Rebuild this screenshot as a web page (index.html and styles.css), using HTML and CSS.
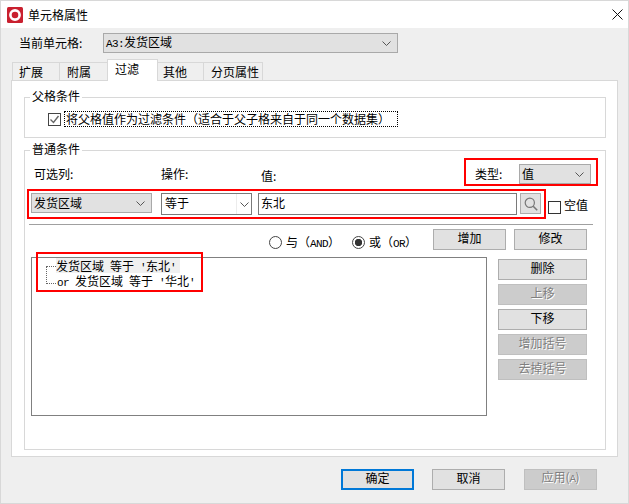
FILE: index.html
```html
<!DOCTYPE html>
<html lang="zh">
<head>
<meta charset="utf-8">
<title>单元格属性</title>
<link rel="stylesheet" href="styles.css">
</head>
<body>
<div class="window">
  <header class="titlebar">
    <svg class="app-icon" width="16" height="16" viewBox="0 0 16 16"><rect width="16" height="16" rx="1.5" fill="#c9202f"/><circle cx="8" cy="8" r="4.6" fill="none" stroke="#fff" stroke-width="2.6"/></svg>
    <span class="title">单元格属性</span>
    <svg class="close" width="11" height="11" viewBox="0 0 11 11"><path d="M.5.5l10 10M10.5.5l-10 10" stroke="#111" fill="none"/></svg>
  </header>

  <div class="cell-row">
    <span class="cell-label">当前单元格:</span>
    <div class="select select-cell">
      <span><span class="asc">A3:</span>发货区域</span>
      <svg class="chev" width="9" height="5" viewBox="0 0 9 5"><path d="M.5.5l4 4 4-4" stroke="#555" fill="none"/></svg>
    </div>
  </div>

  <nav class="tabs">
    <span class="tab tab-a">扩展</span>
    <span class="tab tab-b">附属</span>
    <span class="tab tab-active">过滤</span>
    <span class="tab tab-c">其他</span>
    <span class="tab tab-d">分页属性</span>
  </nav>

  <main class="panel">
    <fieldset class="group group-parent">
      <legend>父格条件</legend>
      <div class="parent-row">
        <svg class="check" width="13" height="13" viewBox="0 0 13 13"><rect x=".5" y=".5" width="12" height="12" fill="#fff" stroke="#444"/><path d="M2.5 6.5l3 3 5-6.5" stroke="#666" stroke-width="1.4" fill="none"/></svg>
        <span class="focus-label">将父格值作为过滤条件（适合于父子格来自于同一个数据集）</span>
      </div>
    </fieldset>

    <fieldset class="group group-normal">
      <legend>普通条件</legend>

      <div class="labels-row">
        <span class="col-1">可选列:</span>
        <span class="col-2">操作:</span>
        <span class="col-3">值:</span>
        <span class="type-label">类型:</span>
        <div class="select select-type">
          <span>值</span>
          <svg class="chev" width="9" height="5" viewBox="0 0 9 5"><path d="M.5.5l4 4 4-4" stroke="#555" fill="none"/></svg>
        </div>
      </div>

      <div class="fields-row">
        <div class="select select-col">
          <span>发货区域</span>
          <svg class="chev" width="9" height="5" viewBox="0 0 9 5"><path d="M.5.5l4 4 4-4" stroke="#555" fill="none"/></svg>
        </div>
        <div class="select select-op">
          <span class="op-value">等于</span>
          <span class="op-arrow"><svg class="chev" width="9" height="5" viewBox="0 0 9 5"><path d="M.5.5l4 4 4-4" stroke="#555" fill="none"/></svg></span>
        </div>
        <div class="text-input">东北</div>
        <div class="search-btn">
          <svg width="14" height="14" viewBox="0 0 14 14"><circle cx="5.8" cy="5.8" r="4.6" fill="none" stroke="#777" stroke-width="1.2"/><path d="M9.2 9.2l4 4" stroke="#777" stroke-width="1.6"/></svg>
        </div>
        <span class="box"></span>
        <span class="box-label">空值</span>
      </div>

      <div class="separator"></div>

      <div class="logic-row">
        <span class="radio"></span>
        <span class="radio-text">与（<span class="asc">AND</span>）</span>
        <span class="radio radio-on"></span>
        <span class="radio-text radio-text-or">或（<span class="asc">OR</span>）</span>
        <button class="btn btn-add">增加</button>
        <button class="btn btn-edit">修改</button>
      </div>

      <div class="list-row">
        <div class="tree">
          <div class="tree-row"><span class="tree-sel">发货区域<span class="asc"> </span>等于<span class="asc"> '</span>东北<span class="asc">'</span></span></div>
          <div class="tree-row tree-row-second"><span class="asc">or </span>发货区域<span class="asc"> </span>等于<span class="asc"> '</span>华北<span class="asc">'</span></div>
        </div>
        <div class="side-btns">
          <button class="btn btn-side">删除</button>
          <button class="btn btn-side btn-off">上移</button>
          <button class="btn btn-side">下移</button>
          <button class="btn btn-side btn-off">增加括号</button>
          <button class="btn btn-side btn-off">去掉括号</button>
        </div>
      </div>
    </fieldset>
  </main>

  <footer class="footer">
    <button class="btn btn-foot btn-primary">确定</button>
    <button class="btn btn-foot btn-cancel">取消</button>
    <button class="btn btn-foot btn-off">应用(<span class="asc">A</span>)</button>
  </footer>

  <span class="mark mark-type"></span>
  <span class="mark mark-fields"></span>
  <span class="mark mark-tree"></span>
</div>
</body>
</html>
```
FILE: styles.css
```css
* { box-sizing: border-box; }
html, body { margin: 0; padding: 0; }
body {
  font: 12px/14px "Noto Sans CJK SC", "Liberation Sans", sans-serif;
  color: #000;
  background: #efefef;
}
.asc {
  font: 11px/14px "Liberation Mono", monospace;
  letter-spacing: -0.6px;
  white-space: pre;
}

.window {
  position: relative;
  width: 629px;
  height: 504px;
  background: #efefef;
  border: 1px solid #d8d8d8;
  display: flex;
  flex-direction: column;
  overflow: hidden;
}

.titlebar {
  height: 27px;
  flex: none;
  background: #fff;
  display: flex;
  align-items: center;
  padding: 0 5px 0 6px;
}
.app-icon { flex: none; }
.title { margin-left: 5px; flex: 1; }

.cell-row {
  display: flex;
  align-items: center;
  height: 20px;
  margin-top: 5px;
  flex: none;
  padding-left: 18px;
}
.cell-label { width: 84px; }

.select {
  display: flex;
  align-items: center;
  justify-content: space-between;
  background: #e1e1e1;
  border: 1px solid #a9a9a9;
  padding: 0 6px 0 2px;
  height: 20px;
}
.select-cell { width: 295px; }
.select-type { width: 72px; }
.select-col { width: 121px; }
.select-op {
  width: 91px;
  height: 22px;
  background: #fff;
  border-color: #7a7a7a;
  margin-left: 9px;
  padding: 0;
}
.op-value { padding: 0 0 3px 3px; }
.op-arrow {
  width: 15px;
  height: 20px;
  border-left: 1px solid #ececec;
  display: flex;
  align-items: center;
  justify-content: center;
}
.chev { flex: none; }

.tabs {
  display: flex;
  align-items: flex-end;
  flex: none;
  height: 22px;
  margin-top: 6px;
  padding-left: 11px;
  position: relative;
  z-index: 1;
  margin-bottom: -1px;
}
.tab {
  height: 19px;
  border: 1px solid #d8d8d8;
  border-left-width: 0;
  line-height: 17px;
}
.tab-a { width: 48px; border-left-width: 1px; padding-left: 6px; }
.tab-b { width: 47px; border-right-width: 0; padding-left: 7px; }
.tab-c { width: 46px; padding-left: 5px; }
.tab-d { width: 59px; padding-left: 7px; }
.tab-active {
  width: 51px;
  height: 22px;
  background: #fff;
  border-left-width: 1px;
  border-bottom: 0;
  line-height: 18px;
  padding-left: 7px;
}

.panel {
  margin-left: 10px;
  width: 607px;
  height: 377px;
  flex: none;
  background: #fff;
  border: 1px solid #d8d8d8;
  padding: 8px 11px 6px 12px;
  display: flex;
  flex-direction: column;
}

.group {
  margin: 0;
  padding: 0;
  min-width: 0;
  border: 1px solid #d8d8d8;
}
.group legend {
  margin-left: 5px;
  padding: 0 2px 2px;
  line-height: 14px;
}
.group-parent { height: 49px; flex: none; }
.group-normal { flex: 1; margin-top: 4px; }

.parent-row {
  display: flex;
  align-items: center;
  height: 16px;
  margin-top: 6px;
  padding-left: 23px;
}
.check { flex: none; }
.focus-label {
  margin-left: 3px;
  border: 1px dotted #000;
  padding: 0 7px 0 1px;
  line-height: 14px;
}

.labels-row {
  display: flex;
  align-items: center;
  height: 20px;
  margin-top: 6px;
  padding-left: 9px;
}
.col-1 { width: 127px; }
.col-2 { width: 100px; }
.col-3 { width: 214px; padding-top: 4px; }
.type-label { width: 44px; }

.fields-row {
  display: flex;
  align-items: flex-start;
  height: 22px;
  margin-top: 9px;
  padding-left: 6px;
}
.text-input {
  width: 259px;
  height: 22px;
  margin-left: 6px;
  border: 1px solid #7a7a7a;
  padding-left: 2px;
  line-height: 17px;
  background: #fff;
}
.search-btn {
  width: 21px;
  height: 21px;
  margin-left: 3px;
  background: #e1e1e1;
  border: 1px solid #adadad;
  display: flex;
  align-items: center;
  justify-content: center;
}
.box {
  width: 13px;
  height: 13px;
  margin: 8px 0 0 7px;
  border: 1px solid #333;
  background: #fff;
}
.box-label { margin: 5px 0 0 3px; }

.separator {
  height: 1px;
  background: #a0a0a0;
  margin: 9px 12px 0 4px;
}

.logic-row {
  display: flex;
  align-items: center;
  height: 21px;
  margin-top: 4px;
  padding-left: 244px;
}
.radio {
  width: 13px;
  height: 13px;
  border: 1px solid #444;
  border-radius: 50%;
  background: #fff;
  flex: none;
  position: relative;
  top: 3px;
}
.radio-on { background: radial-gradient(circle, #333 0 3.4px, #fff 4px); }
.radio-text { margin-left: 4px; width: 66px; position: relative; top: 3px; }
.radio-text-or { width: 64px; }

.btn {
  font: inherit;
  color: #000;
  height: 21px;
  padding: 0 0 3px;
  background: #e1e1e1;
  border: 1px solid #adadad;
  border-radius: 0;
  line-height: 14px;
  flex: none;
}
.btn-add { width: 73px; }
.btn-edit { width: 73px; margin-left: 8px; }
.btn-off {
  background: #ccc;
  border-color: #bfbfbf;
  color: #7f7f7f;
  text-shadow: 1px 1px 0 #fff;
}

.list-row {
  display: flex;
  margin-top: 7px;
  padding-left: 6px;
}
.tree {
  position: relative;
  width: 456px;
  height: 159px;
  border: 1px solid #808080;
  background: #fff;
  padding: 0 0 0 24px;
}
.tree::before {
  content: "";
  position: absolute;
  left: 14px;
  top: 8px;
  width: 9px;
  height: 16px;
  border-left: 1px dotted #666;
  border-top: 1px dotted #666;
  border-bottom: 1px dotted #666;
}
.tree-row { height: 15px; white-space: pre; line-height: 15px; overflow: hidden; }
.tree-row-second { padding-left: 1px; }
.tree-sel { display: inline-block; background: #f0f0f0; width: 124px; height: 15px; }

.side-btns {
  display: flex;
  flex-direction: column;
  gap: 4px;
  margin: 2px 0 0 11px;
}
.btn-side { width: 89px; }

.footer {
  display: flex;
  flex: none;
  gap: 19px;
  justify-content: flex-end;
  padding: 12px 31px 0 0;
}
.btn-foot { width: 73px; }
.btn-cancel { margin-left: -1px; }
.btn-primary { border: 2px solid #0078d7; }

.mark {
  position: absolute;
  border: 2px solid #f00;
  z-index: 2;
  pointer-events: none;
}
.mark-type { left: 463px; top: 157px; width: 134px; height: 28px; }
.mark-fields { left: 26px; top: 188px; width: 519px; height: 30px; }
.mark-tree { left: 35px; top: 251px; width: 167px; height: 40px; }
```
